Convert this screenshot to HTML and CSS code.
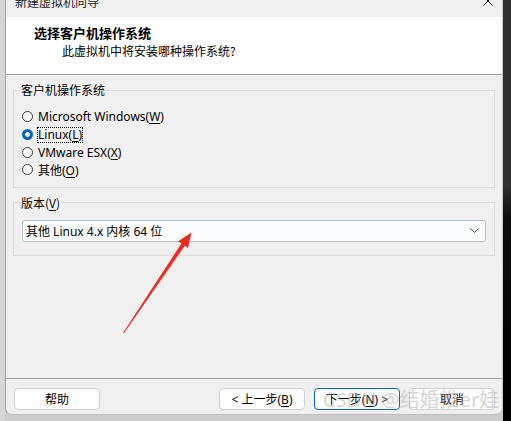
FILE: index.html
```html
<!DOCTYPE html>
<html lang="zh-CN">
  <head>
    <meta charset="UTF-8" />
    <title>新建虚拟机向导</title>
    <link rel="stylesheet" href="styles.css">
  </head>
  <body>
    <div class="side-left"></div>
    <div class="window">
      <div class="titlebar">
        <span class="title">新建虚拟机向导</span>
        <svg class="close" width="10" height="10" viewBox="0 0 10 10">
          <path d="M0.5 0.5 L9.5 9.5 M9.5 0.5 L0.5 9.5" stroke="#1a1a1a" stroke-width="1" fill="none" />
        </svg>
      </div>
      <div class="header">
        <div class="heading">选择客户机操作系统</div>
        <div class="subheading">此虚拟机中将安装哪种操作系统?</div>
      </div>
      <div class="content">
        <fieldset class="group">
          <legend>客户机操作系统</legend>
          <div class="radios">
            <div class="radio-row"><span class="radio"></span><span>Microsoft Windows(<u>W</u>)</span></div>
            <div class="radio-row"><span class="radio checked"></span><span class="focus">Linux(<u>L</u>)</span></div>
            <div class="radio-row"><span class="radio"></span><span>VMware ESX(<u>X</u>)</span></div>
            <div class="radio-row"><span class="radio"></span><span>其他(<u>O</u>)</span></div>
          </div>
        </fieldset>
        <fieldset class="group version">
          <legend>版本(<u>V</u>)</legend>
          <div class="select">
            <span>其他 Linux 4.x 内核 64 位</span>
            <svg width="9" height="5" viewBox="0 0 9 5">
              <path d="M0.5 0.5 L4.5 4.5 L8.5 0.5" stroke="#444" stroke-width="1" fill="none" />
            </svg>
          </div>
        </fieldset>
      </div>
      <div class="footer">
        <button class="btn">帮助</button>
        <div class="spacer"></div>
        <button class="btn">&lt; 上一步(<u>B</u>)</button>
        <button class="btn primary">下一步(<u>N</u>) &gt;</button>
        <button class="btn">取消</button>
      </div>
    </div>
    <div class="side-right"></div>

    <!-- annotation arrow drawn over the screenshot -->
    <svg class="arrow" width="511" height="421" viewBox="0 0 511 421">
      <polygon points="123,333 181.4,243.5 178.2,241.2 191.5,232.5 188,248 184.8,245.7 123.8,333.4" fill="#ee2a22" />
    </svg>
    <div class="watermark">CSDN @结婚推er娃</div>
  </body>
</html>
```

FILE: styles.css
```css
* {
  box-sizing: border-box;
}
html,
body {
  margin: 0;
  padding: 0;
}
body {
  position: relative;
  width: 511px;
  height: 421px;
  overflow: hidden;
  display: flex;
  align-items: flex-start;
  background: #cdcdcd;
  font-family: "Noto Sans", "Noto Sans CJK SC", sans-serif;
  font-size: 12px;
  color: #000;
}
u {
  text-decoration-thickness: 1px;
  text-underline-offset: 2px;
}
/* Background windows around the dialog */
.side-left {
  width: 5px;
  height: 421px;
  background: #d6d6d6;
}
.side-right {
  width: 8px;
  height: 421px;
  background: linear-gradient(to bottom, #303030 0, #303030 44%, #0c0c0c 52%, #000 100%);
}
/* Dialog window */
.window {
  width: 498px;
  height: 415px;
  display: flex;
  flex-direction: column;
  background: #f0f0f0;
  border-left: 1px solid #a2a2a2;
  border-right: 1px solid #c8c8c8;
  border-bottom: 1px solid #bdbdbd;
  border-radius: 0 0 7px 7px;
  overflow: hidden;
}
.titlebar {
  height: 17px;
  display: flex;
  justify-content: space-between;
  align-items: flex-start;
  padding: 0 9px 0 9px;
  background: #f0f0f0;
  overflow: hidden;
}
.title {
  margin-top: -7px;
  line-height: 17px;
  font-family: "Noto Sans CJK SC", sans-serif;
  color: #1a1a1a;
}
.close {
  margin-top: -4px;
}
.header {
  height: 58px;
  padding: 8px 0 0 28px;
  background: #fff;
  border-bottom: 1px solid #a0a0a0;
  font-family: "Noto Sans CJK SC", sans-serif;
}
.heading {
  font-size: 13px;
  font-weight: bold;
  line-height: 16px;
}
.subheading {
  margin-top: 2px;
  padding-left: 28px;
  line-height: 16px;
}
/* Main area */
.content {
  flex: 1;
  padding: 7px 7px 0 7px;
}
.group {
  margin: 0;
  padding: 0 0 8px 6px;
  border: 1px solid #dadada;
  min-width: 0;
}
.group legend {
  padding: 0 1px;
  line-height: 16px;
  font-family: "Noto Sans CJK SC", sans-serif;
}
.radios {
  margin-top: 10px;
  padding-left: 2px;
}
.radio-row {
  height: 17.7px;
  display: flex;
  align-items: center;
  gap: 5px;
  white-space: nowrap;
}
.radio {
  flex: none;
  display: block;
  width: 11px;
  height: 11px;
  border: 1px solid #333;
  border-radius: 50%;
  background: #fff;
}
.radio.checked {
  border: none;
  background: radial-gradient(circle, #fff 0, #fff 2px, #0067c0 2.6px);
}
.focus {
  outline: 1px dotted #000;
  outline-offset: 0;
  line-height: 14px;
}
.version {
  margin-top: 7px;
  padding-bottom: 13px;
}
.select {
  margin: 9px 0 0 2px;
  width: 464px;
  height: 22px;
  display: flex;
  align-items: center;
  justify-content: space-between;
  padding: 0 6px 0 3px;
  background: #fbfcfe;
  border: 1px solid #b5c0d0;
  border-radius: 3px;
  font-family: "Noto Sans", "Noto Sans CJK SC", sans-serif;
}
/* Footer buttons */
.footer {
  height: 36px;
  display: flex;
  align-items: flex-start;
  gap: 9px;
  padding: 9px 7px 0 8px;
  border-top: 1px solid #a0a0a0;
}
.spacer {
  flex: 1;
}
.btn {
  width: 86px;
  height: 22px;
  padding: 0;
  background: #fdfdfd;
  border: 1px solid #d0d0d0;
  border-radius: 4px;
  font-family: "Noto Sans", "Noto Sans CJK SC", sans-serif;
  font-size: 12px;
  color: #000;
}
.btn.primary {
  border-color: #0067c0;
}
/* Overlays: annotation arrow and image watermark */
.arrow {
  position: absolute;
  left: 0;
  top: 0;
  pointer-events: none;
}
.watermark {
  position: absolute;
  left: 323px;
  top: 387px;
  font-family: "Noto Sans", "Noto Sans CJK SC", sans-serif;
  font-size: 20px;
  line-height: 26px;
  color: rgba(175, 175, 175, 0.5);
  white-space: nowrap;
  pointer-events: none;
}
```
